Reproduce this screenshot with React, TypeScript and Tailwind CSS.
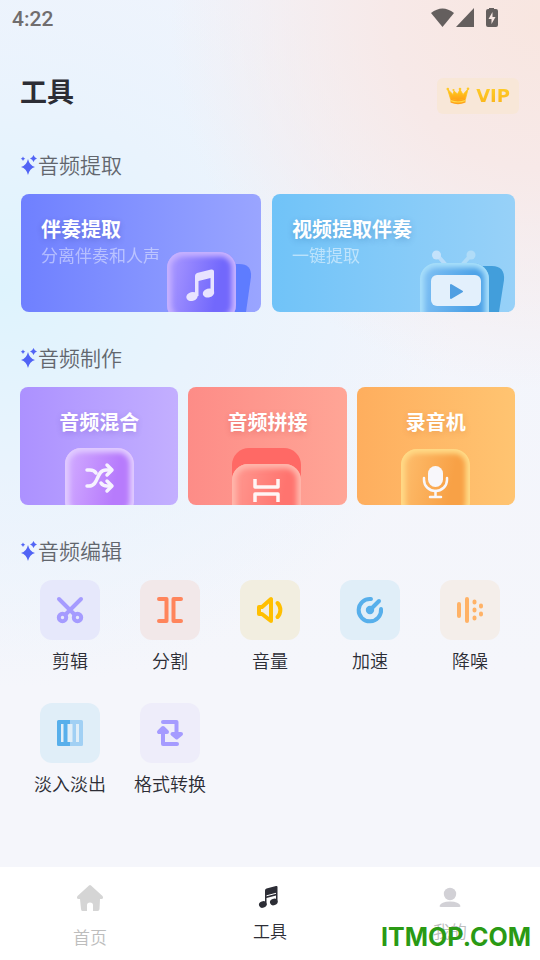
import type { ReactNode } from 'react';

type ToolItem = {
  label: string;
  box: string;
  icon: ReactNode;
};

const GlossyTile = ({
  id,
  x,
  y,
  from,
  to,
  edge,
}: {
  id: string;
  x: number;
  y: number;
  from: string;
  to: string;
  edge: string;
}) => (
  <>
    <defs>
      <linearGradient id={`${id}-fill`} x1="0" x2="1" y1="0.3" y2="0.5">
        <stop offset="0.1" stopColor={from} />
        <stop offset="0.75" stopColor={to} />
      </linearGradient>
      <clipPath id={`${id}-clip`}>
        <rect x={x} y={y} width="69" height="69" rx="16" />
      </clipPath>
      <filter id={`${id}-blur`} x="-20%" y="-20%" width="140%" height="140%">
        <feGaussianBlur stdDeviation="2.5" />
      </filter>
    </defs>
    <rect x={x} y={y} width="69" height="69" rx="16" fill={`url(#${id}-fill)`} />
    <g clipPath={`url(#${id}-clip)`}>
      <rect x={x} y={y} width="69" height="69" rx="16" fill="none" stroke={edge} strokeWidth="9" filter={`url(#${id}-blur)`} />
      <rect x={x} y={y} width="69" height="69" rx="16" fill="none" stroke={edge} strokeWidth="3" opacity="0.6" />
    </g>
  </>
);

const SparkleIcon = () => (
  <svg className="h-5 w-[18px]" viewBox="0 0 18 20" fill="#5163f5" aria-hidden="true">
    <path d="M8 4 Q9.500 10.500 15 12 Q9.500 13.500 8 20 Q6.500 13.500 1 12 Q6.500 10.500 8 4Z" />
    <path d="M13.500 0 L14.800 2.200 L17 3.500 L14.800 4.800 L13.500 7 L12.200 4.800 L10 3.500 L12.200 2.200Z" />
    <path d="M3 1.500 L3.800 3 L5.300 3.800 L3.800 4.600 L3 6.100 L2.200 4.600 L0.700 3.800 L2.200 3Z" />
  </svg>
);

const CrownIcon = () => (
  <svg className="h-5 w-6" viewBox="0 0 24 20" aria-hidden="true">
    <defs>
      <linearGradient id="crown" x1="0" x2="0" y1="0" y2="1">
        <stop offset="0" stopColor="#ffd21f" />
        <stop offset="1" stopColor="#ff9d18" />
      </linearGradient>
    </defs>
    <path
      d="M1.500 3 L7 8.500 L8 5 L11.500 8 L14 3.500 L17 8.500 L22 3 L19.500 13 Q12 16 4.500 13Z"
      fill="url(#crown)"
      stroke="#ffc21c"
      strokeWidth="0.8"
      strokeLinejoin="round"
    />
    <path d="M4.500 12.500 Q12 15.500 19.500 12.500 V16.500 Q12 20 4.500 16.500Z" fill="#ffa31a" />
    <path d="M4.500 14.500 Q12 17.500 19.500 14.500" fill="none" stroke="#ffdc4a" strokeWidth="1.200" />
    <g fill="#ffc928">
      <circle cx="1.800" cy="3" r="1.300" />
      <circle cx="7.500" cy="4" r="1.100" />
      <circle cx="14" cy="3" r="1.300" />
      <circle cx="22" cy="2.800" r="1.300" />
    </g>
  </svg>
);

const MusicArt = () => (
  <svg className="absolute right-0 bottom-0 h-[75px] w-[100px]" viewBox="0 0 100 75" aria-hidden="true">
    <path d="M62 27 H78 Q91 27 90 40 L85 75 H62Z" fill="#5e7cff" />
    <GlossyTile id="music" x={6} y={15} from="#a191ff" to="#7268fc" edge="#c5b0ff" />
    <path d="M34 39 Q34 37 36 36 L50 32.500 Q53 32 53 34.500 V56 H49.500 V41 L37.500 44 V59 H34Z" fill="#e8e3ff" />
    <ellipse cx="31" cy="59.500" rx="5.800" ry="4.500" fill="#e8e3ff" transform="rotate(-15 31 59.500)" />
    <ellipse cx="47.500" cy="56" rx="5.800" ry="4.500" fill="#e8e3ff" transform="rotate(-15 47.500 56)" />
  </svg>
);

const VideoArt = () => (
  <svg className="absolute right-0 bottom-0 h-[75px] w-[100px]" viewBox="0 0 100 75" aria-hidden="true">
    <path d="M67 29 H77 Q90 29 89 43 L84 75 H67Z" fill="#429edb" />
    <path d="M22 18 L31 28" stroke="#b9ddfa" strokeWidth="4" strokeLinecap="round" />
    <path d="M56 18 L47 28" stroke="#b0dcf8" strokeWidth="4" strokeLinecap="round" />
    <circle cx="21.500" cy="18" r="4.500" fill="#c4e2fb" />
    <circle cx="56" cy="18" r="4.500" fill="#b0dcf8" />
    <GlossyTile id="video" x={5} y={26} from="#79bcf2" to="#4da2e7" edge="#a5ddfa" />
    <rect x="16" y="38" width="50" height="31" rx="6" fill="#e3f0fc" />
    <path d="M36 48 V61 L47 54.500Z" fill="#509fe2" stroke="#509fe2" strokeWidth="2" strokeLinejoin="round" />
  </svg>
);

const MixArt = () => (
  <svg className="absolute bottom-0 left-1/2 h-[62px] w-20 -translate-x-1/2" viewBox="0 0 80 62" aria-hidden="true">
    <GlossyTile id="mix" x={6} y={5} from="#cda4ff" to="#b77bfc" edge="#e0caff" />
    <g fill="none" stroke="#f6f2ff" strokeWidth="3.500" strokeLinecap="round" strokeLinejoin="round">
      <path d="M28 27 H31 Q35 27 37 30" />
      <path d="M28 43 H30 C40 43 37 27 47 27 H52" />
      <path d="M42 40 Q44 43 48 43 H52" />
      <path d="M48 22 L53 27 L48 32" />
      <path d="M48 38 L53 43 L48 48" />
    </g>
  </svg>
);

const JoinArt = () => (
  <svg className="absolute bottom-0 left-1/2 h-[62px] w-20 -translate-x-1/2" viewBox="0 0 80 62" aria-hidden="true">
    <rect x="5" y="5" width="69" height="69" rx="17" fill="#ff6965" />
    <GlossyTile id="join" x={5} y={21} from="#ff938b" to="#ff746f" edge="#ffb5aa" />
    <g fill="none" stroke="#fff5f5" strokeWidth="3.500" strokeLinejoin="round">
      <path d="M28 36 V44 H51 V36" />
      <path d="M28 59 V51 H51 V59" />
    </g>
  </svg>
);

const RecordArt = () => (
  <svg className="absolute bottom-0 left-1/2 h-[62px] w-20 -translate-x-1/2" viewBox="0 0 80 62" aria-hidden="true">
    <GlossyTile id="record" x={5} y={6} from="#fdb967" to="#f8a146" edge="#ffd985" />
    <rect x="32" y="23" width="15" height="21" rx="7.500" fill="#f8f7fb" />
    <g fill="none" stroke="#f8f7fb" strokeWidth="2.500" strokeLinecap="round">
      <path d="M28 35 V37 A11.500 11 0 0 0 51 37 V35" />
      <path d="M39.500 48 V53 M34 54 H45" />
    </g>
  </svg>
);

const tools: ToolItem[] = [
  {
    label: '剪辑',
    box: 'bg-[#e6e8fb]',
    icon: (
      <g fill="none" stroke="#a59bff" strokeWidth="4" strokeLinecap="round">
        <path d="M4 4 L19 19 M26 4 L11 19" />
        <circle cx="7.500" cy="22.500" r="3.700" />
        <circle cx="22.500" cy="22.500" r="3.700" />
      </g>
    ),
  },
  {
    label: '分割',
    box: 'bg-[#f2e8e9]',
    icon: (
      <g fill="none" stroke="#ff855c" strokeWidth="4" strokeLinecap="round" strokeLinejoin="round">
        <path d="M4 4 H11.500 V26 H4" />
        <path d="M26 4 H18.500 V26 H26" />
      </g>
    ),
  },
  {
    label: '音量',
    box: 'bg-[#f2eee0]',
    icon: (
      <g fill="none" stroke="#ffbf00" strokeWidth="4" strokeLinecap="round" strokeLinejoin="round">
        <path d="M4 12 H7 L16 4 V26 L7 19 H4Z" />
        <path d="M22.500 8 A10 10 0 0 1 22.500 22" />
      </g>
    ),
  },
  {
    label: '加速',
    box: 'bg-[#e0eef8]',
    icon: (
      <g fill="none" stroke="#57afeb" strokeWidth="4" strokeLinecap="round">
        <path d="M16 4 A11.200 11.200 0 1 0 26 14" />
        <path d="M15 15 L24 6" />
        <circle cx="15" cy="15" r="2.200" fill="#57afeb" />
      </g>
    ),
  },
  {
    label: '降噪',
    box: 'bg-[#f4eeea]',
    icon: (
      <g fill="none" stroke="#ffb266" strokeWidth="4" strokeLinecap="round">
        <path d="M4 9 V21 M12 4 V26" />
        <path d="M19.500 6.500 V7.500 M19.500 14.500 V15.500 M19.500 22.500 V23.500 M26 10.500 V11.500 M26 18.500 V19.500" />
      </g>
    ),
  },
  {
    label: '淡入淡出',
    box: 'bg-[#e0eef8]',
    icon: (
      <>
        <path fillRule="evenodd" fill="#57afeb" d="M3.500 2 H15 V28 H3.500 Q2 28 2 26.500 V3.500 Q2 2 3.500 2Z M6 6 V24 H8.500 V6Z M12.500 6 V24 H15 V6Z" />
        <path fillRule="evenodd" fill="#a1d0f4" d="M15 2 H26.500 Q28 2 28 3.500 V26.500 Q28 28 26.500 28 H15 V24 H17.500 V6 H15Z M21 6 V24 H24 V6Z" />
      </>
    ),
  },
  {
    label: '格式转换',
    box: 'bg-[#eeedfa]',
    icon: (
      <g fill="none" stroke="#a59bff" strokeWidth="4" strokeLinecap="round" strokeLinejoin="round">
        <path d="M8 4 H21.500 V17" />
        <path d="M17.500 16 H26 L21.700 19.500Z" fill="#a59bff" />
        <path d="M22 26 H8 V13" />
        <path d="M4 14 H12 L8 10Z" fill="#a59bff" />
      </g>
    ),
  },
];

const SectionTitle = ({ children }: { children: ReactNode }) => (
  <h2 className="mb-[13px] flex h-8 items-center text-[21px] font-[350] text-[#62666d]">
    <SparkleIcon />
    {children}
  </h2>
);

export default function App() {
  return (
    <div
      className="relative flex min-h-screen flex-col bg-[#f5f6fb] bg-[radial-gradient(circle_at_100%_2%,#f8e6e0_0px,#f7e9e8_150px,transparent_370px),radial-gradient(460px_400px_at_0%_30%,#def3fd_0%,#e9f3fd_45%,transparent_100%),linear-gradient(#f1f4fc,#f5f6fb_70%)] text-[#2c2d35]"
      style={{ fontFamily: '"Noto Sans CJK SC", sans-serif' }}
    >
      <div className="flex h-9 items-center justify-between pr-[41px] pl-3 text-[#645f5e]">
        <span className="pt-[2px] font-[Roboto] text-[21px] leading-8 font-medium text-[#706d6e]">4:22</span>
        <svg className="h-5 w-[68px]" viewBox="0 0 68 20" fill="currentColor" aria-hidden="true">
          <path d="M0 5 Q11.500 -4 23 5 L11.500 19Z" />
          <path d="M25 19 L43 0 V19Z" />
          <path
            fillRule="evenodd"
            d="M58 -1 H63 V1 H65 Q67 1 67 3 V17 Q67 19 65 19 H57 Q55 19 55 17 V3 Q55 1 57 1 H58Z M61.500 4 L57.500 11 H60.500 V16 L64.500 9 H61.500Z"
          />
        </svg>
      </div>

      <header className="flex items-start justify-between pt-[42px] pr-[21px] pb-1 pl-5">
        <h1 className="text-[27px] leading-[26px] font-bold">工具</h1>
        <button className="flex h-9 items-center gap-[6px] rounded-md bg-[#f8e7d8] px-[9px]">
          <CrownIcon />
          <span className="bg-gradient-to-b from-[#ffd32b] to-[#f9ae16] bg-clip-text font-[DejaVu_Sans] text-lg font-bold text-transparent">
            VIP
          </span>
        </button>
      </header>

      <main className="flex-1 px-5 pb-[60px]">
        <section className="pt-[31px]">
          <SectionTitle>音频提取</SectionTitle>
          <div className="grid grid-cols-[240fr_243fr] gap-[11px] pr-[5px] pl-px">
            <button className="relative h-[118px] overflow-hidden rounded-lg bg-gradient-to-r from-[#6f80ff] to-[#9aa5ff] text-left">
              <div className="flex h-full flex-col pt-[22px] pl-5 text-white">
                <span className="text-xl leading-[26px] font-bold text-shadow-[0_2px_6px_rgb(0_0_90/0.2)]">伴奏提取</span>
                <span className="text-[17px] leading-[26px] opacity-45">分离伴奏和人声</span>
              </div>
              <MusicArt />
            </button>
            <button className="relative h-[118px] overflow-hidden rounded-lg bg-gradient-to-r from-[#70c3f8] to-[#97d1f8] text-left">
              <div className="flex h-full flex-col pt-[22px] pl-5 text-white">
                <span className="text-xl leading-[26px] font-bold text-shadow-[0_2px_6px_rgb(0_70_140/0.25)]">视频提取伴奏</span>
                <span className="text-[17px] leading-[26px] opacity-50">一键提取</span>
              </div>
              <VideoArt />
            </button>
          </div>
        </section>

        <section className="pt-[30px]">
          <SectionTitle>音频制作</SectionTitle>
          <div className="grid grid-cols-3 gap-[10px] pr-[5px] text-xl leading-[26px] font-bold text-white">
            <button className="relative flex h-[118px] justify-center overflow-hidden rounded-lg bg-gradient-to-r from-[#ac91ff] to-[#c3afff] pt-[22px]">
              <span className="text-shadow-[0_2px_6px_rgb(60_0_140/0.2)]">音频混合</span>
              <MixArt />
            </button>
            <button className="relative flex h-[118px] justify-center overflow-hidden rounded-lg bg-gradient-to-r from-[#fd8c87] to-[#ffa596] pt-[22px]">
              <span className="text-shadow-[0_2px_6px_rgb(160_0_0/0.2)]">音频拼接</span>
              <JoinArt />
            </button>
            <button className="relative flex h-[118px] justify-center overflow-hidden rounded-lg bg-gradient-to-r from-[#feae5e] to-[#ffc471] pt-[22px]">
              <span className="text-shadow-[0_2px_6px_rgb(170_70_0/0.2)]">录音机</span>
              <RecordArt />
            </button>
          </div>
        </section>

        <section className="pt-[30px]">
          <SectionTitle>音频编辑</SectionTitle>
          <div className="grid grid-cols-5 gap-y-[31px]">
            {tools.map((tool) => (
              <button key={tool.label} className="flex flex-col items-center">
                <span className={`flex size-[60px] items-center justify-center rounded-xl ${tool.box}`}>
                  <svg className="size-[30px]" viewBox="0 0 30 30" aria-hidden="true">
                    {tool.icon}
                  </svg>
                </span>
                <span className="mt-2 text-lg leading-6 font-[350] whitespace-nowrap">{tool.label}</span>
              </button>
            ))}
          </div>
        </section>
      </main>

      <nav className="grid h-[93px] grid-cols-3 bg-white text-[17px] leading-6 font-[350]">
        <a href="#home" className="flex flex-col items-center pt-[9px] text-[#bdbdbd]">
          <svg className="mb-[5px] h-11 w-7" viewBox="0 0 28 44" fill="#d5d5d5" aria-hidden="true">
            <path d="M13 9.500 Q14 8.500 15 9.500 L26.500 20 Q28 22.500 25.500 23 H24 L23.500 33 Q23.500 35 21.500 35 H17 V29 Q17 26.500 14 26.500 Q11 26.500 11 29 V35 H6.500 Q5 35 5 33 L4 23 H2.500 Q0 22.500 1.500 20Z" />
          </svg>
          首页
        </a>
        <a href="#tools" className="flex flex-col items-center pt-[15px]">
          <svg className="mb-[5px] size-8" viewBox="0 0 32 32" aria-hidden="true">
            <g fill="#2c2d35">
              <path d="M11 8.500 Q11 7 12.500 6.500 L22 4 Q23.500 3.500 23.500 5 V20 H22 V13.500 L12.500 16 V23 H11Z" />
              <ellipse cx="8.800" cy="22.500" rx="3.900" ry="3.200" transform="rotate(-20 8.800 22.500)" />
              <ellipse cx="19.800" cy="20" rx="3.900" ry="3.200" transform="rotate(-20 19.800 20)" />
            </g>
            <path d="M12.500 13.800 L22 11.300" stroke="#fff" strokeWidth="1" />
          </svg>
          工具
        </a>
        <a href="#mine" className="flex flex-col items-center pt-[15px] text-[#bdbdbd]">
          <svg className="mb-[5px] size-8" viewBox="0 0 32 32" fill="#d2d1d6" aria-hidden="true">
            <circle cx="16" cy="12" r="6.200" />
            <path d="M5.500 24 Q7 19.500 16 19.500 Q25 19.500 26.500 24 Q26.500 25 25 25 H7 Q5.500 25 5.500 24Z" />
          </svg>
          我的
        </a>
      </nav>

      <span className="absolute right-[9px] bottom-[5px] font-[Inter] text-[25px] leading-9 font-bold text-[#2a9a14]">
        ITMOP.COM
      </span>
    </div>
  );
}
